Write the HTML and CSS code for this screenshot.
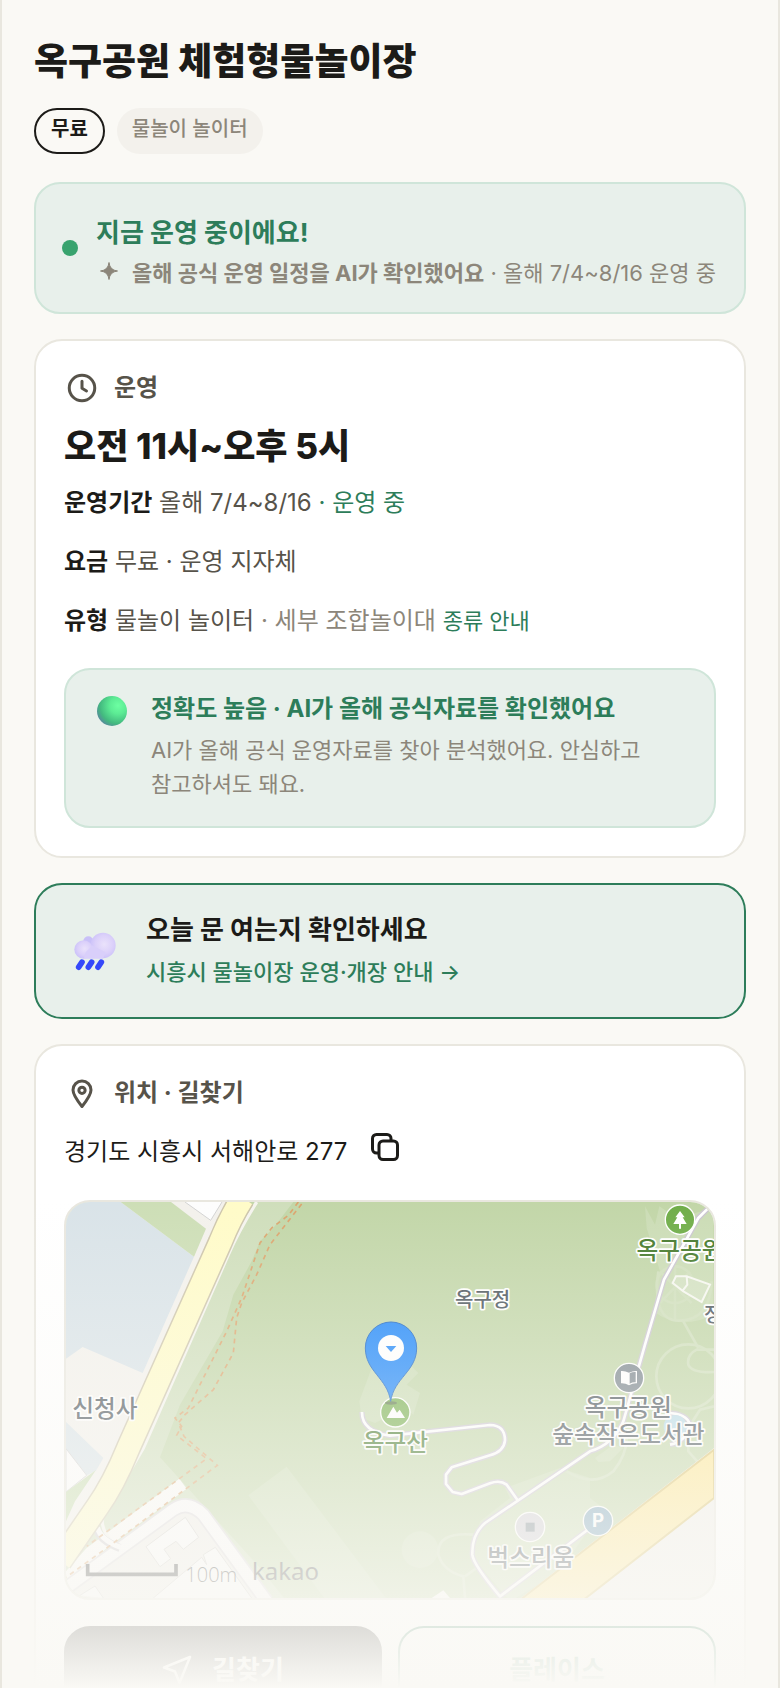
FILE: index.html
```html
<!DOCTYPE html>
<html lang="ko">
<head>
    <meta charset="UTF-8">
    <meta name="viewport" content="width=device-width, initial-scale=1.0">
    <title>옥구공원 체험형물놀이장</title>
    <link rel="stylesheet" href="styles.css">
</head>
<body>
    <main class="page">
        <h1>옥구공원 체험형물놀이장</h1>
        <div class="chips">
            <span class="chip chip-free">무료</span>
            <span class="chip">물놀이 놀이터</span>
        </div>

        <div class="cards">
            <section class="status">
                <span class="dot"></span>
                <div class="status-body">
                    <p class="status-title">지금 운영 중이에요!</p>
                    <p class="status-sub">
                        <svg class="sparkle" viewBox="0 0 24 24"><path d="M13 1.500Q13.800 9.200 21.500 10Q13.800 10.800 13 18.500Q12.200 10.800 4.500 10Q12.200 9.200 13 1.500Z" fill="currentColor" stroke="currentColor" stroke-width="1"/></svg>
                        <span><b>올해 공식 운영 일정을 AI가 확인했어요</b> · 올해 7/4~8/16 운영 중</span>
                    </p>
                </div>
            </section>

            <section class="card">
                <h2>
                    <svg class="icon" viewBox="0 0 24 24"><circle cx="12" cy="12" r="8.500"/><path d="M12 7.500v4.700l3 1.800"/></svg>
                    운영
                </h2>
                <p class="hours">오전 11시~오후 5시</p>
                <div class="facts">
                    <p><b>운영기간</b> 올해 7/4~8/16 <span class="green">· 운영 중</span></p>
                    <p><b>요금</b> 무료 · 운영 지자체</p>
                    <p><b>유형</b> 물놀이 놀이터 <span class="muted">· 세부 조합놀이대</span> <a href="#">종류 안내</a></p>
                </div>
                <div class="accuracy">
                    <svg class="ball" viewBox="0 0 30 30">
                        <defs>
                            <radialGradient id="ball" cx=".7" cy=".32" r=".8">
                                <stop offset="0" stop-color="#6dffa2"/>
                                <stop offset=".35" stop-color="#5ceb94"/>
                                <stop offset=".75" stop-color="#43b97f"/>
                                <stop offset="1" stop-color="#5a83a0"/>
                            </radialGradient>
                        </defs>
                        <circle cx="15" cy="15" r="15" fill="url(#ball)"/>
                    </svg>
                    <div>
                        <p class="accuracy-title">정확도 높음 · AI가 올해 공식자료를 확인했어요</p>
                        <p class="accuracy-text">AI가 올해 공식 운영자료를 찾아 분석했어요. 안심하고 참고하셔도 돼요.</p>
                    </div>
                </div>
            </section>

            <a class="notice" href="#">
                <svg class="cloud" viewBox="0 0 126 116">
                    <defs>
                        <radialGradient id="puff" cx=".55" cy=".45" r=".6">
                            <stop offset="0" stop-color="#eae2fb"/>
                            <stop offset=".6" stop-color="#dbd0fa"/>
                            <stop offset="1" stop-color="#c8bff9"/>
                        </radialGradient>
                    </defs>
                    <circle cx="43" cy="27" r="15" fill="#c9c0f8"/>
                    <circle cx="87" cy="40" r="38" fill="url(#puff)"/>
                    <circle cx="29" cy="52" r="28" fill="url(#puff)"/>
                    <path d="M29 80h58l8-20-40-20-20 20z" fill="#d9cffa"/>
                    <g fill="none" stroke="#3548fa" stroke-width="17" stroke-linecap="round">
                        <path d="M14 105l10-15M43 105l10-15M72 105l10-15"/>
                    </g>
                </svg>
                <span class="notice-body">
                    <strong>오늘 문 여는지 확인하세요</strong>
                    <span class="notice-link">시흥시 물놀이장 운영·개장 안내 →</span>
                </span>
            </a>

            <section class="card">
                <h2>
                    <svg class="icon" viewBox="0 0 24 24"><path d="M12 21C8.500 16.600 6 13.300 6 10a6 6 0 0 1 12 0c0 3.300-2.500 6.600-6 11z"/><circle cx="12" cy="10.200" r="2.100"/></svg>
                    위치 · 길찾기
                </h2>
                <div class="address">
                    <span>경기도 시흥시 서해안로 277</span>
                    <button class="copy" type="button" aria-label="주소 복사">
                        <svg viewBox="0 0 28 28"><rect x="8" y="8" width="18.500" height="18.500" rx="4"/><path d="M8 20H5.500a4 4 0 0 1-4-4V5.500a4 4 0 0 1 4-4H16a4 4 0 0 1 4 4V8"/></svg>
                    </button>
                </div>

                <div class="map">
                    <svg viewBox="18 42 1944 1188" preserveAspectRatio="xMidYMid slice">
                        <rect x="18" y="42" width="1944" height="1188" fill="#c2d6a8"/>
                        <!-- lighter park strip -->
                        <path d="M590 42H700L640 120L600 160L575 220L520 320L488 430L360 650L300 808L600 1140L680 1240H18V700L240 240Z" fill="#cfdebb"/>
                        <!-- water and blocks left of the road -->
                        <path d="M18 42H520L440 210L170 790L18 1050Z" fill="#f3f1ec"/>
                        <path d="M18 42H182L402 206L248 555L68 477L18 512Z" fill="#d9e3e8"/>
                        <path d="M182 42H333L438 122L402 206Z" fill="#cddeb6"/>
                        <path d="M375 42L452 97L486 42" fill="#fdfdfd" stroke="#d3d3d3" stroke-width="3"/>
                        <path d="M18 702L130 810L108 848L80 862L18 912Z" fill="#d9e3e8"/>
                        <path d="M18 782L80 862L18 912Z" fill="#fdfdfd" stroke="#d3d3d3" stroke-width="3"/>
                        <path d="M18 912L108 846L45 940L18 1000Z" fill="#c7dcaf"/>
                        <!-- lower left quarter -->
                        <path d="M18 1192L350 960Q400 930 440 985L640 1240H18Z" fill="#efede8"/>
                        <path d="M80 1080L358 872L380 902L140 1080L18 1190V1150Z" fill="#fbfaf7"/>
                        <path d="M18 1200L340 965Q385 935 430 980L620 1240" fill="none" stroke="#dddadd" stroke-width="44"/>
                        <path d="M18 1200L340 965Q385 935 430 980L620 1240" fill="none" stroke="#fbfafa" stroke-width="34"/>
                        <g fill="#fafafa" stroke="#d2d0cc" stroke-width="3">
                            <path d="M258 1076L376 988L416 1048L370 1084L348 1060L312 1084L332 1112L300 1136Z"/>
                            <path d="M280 1230L425 1108L440 1130L430 1100L466 1078L575 1230"/>
                            <path d="M60 1222L105 1194L130 1230"/>
                        </g>
                        <!-- main road -->
                        <path d="M590 42Q535 130 505 200L250 780L130 985Q115 1020 170 1080" fill="none" stroke="#f5f4ee" stroke-width="10"/>
                        <path d="M110 1022Q120 1058 180 1080" fill="none" stroke="#cfccd0" stroke-width="24"/>
                        <path d="M112 1018Q122 1056 182 1078" fill="none" stroke="#fbfafa" stroke-width="16"/>
                        <path d="M548 30Q510 90 480 165L205 780Q160 890 110 960L0 1120" fill="none" stroke="#cdc5ab" stroke-width="76"/>
                        <path d="M548 30Q510 90 480 165L205 780Q160 890 110 960L0 1120" fill="none" stroke="#fffbc8" stroke-width="67"/>
                        <!-- footpaths -->
                        <g fill="none" stroke="#dba46d" stroke-width="5" stroke-dasharray="14 13">
                            <path d="M715 42L685 82L635 120L600 165L575 240L545 330L500 430L440 550L385 660L345 690L365 715L350 742L440 812L80 1075"/>
                            <path d="M725 48L630 170L590 260L545 345L530 390L520 495L460 605L375 680L355 705L372 745L472 832L140 1080L18 1168"/>
                        </g>
                        <!-- faint clearings -->
                        <g fill="#cbdcb5">
                            <path d="M565 922L680 836L985 1240H800Z"/>
                            <path d="M935 540L898 640L905 690L945 705L1035 660L1060 680L1080 615L1040 590L1075 555L1050 530Z"/>
                            <circle cx="1080" cy="1085" r="55"/>
                            <path d="M1755 55L1785 110L1798 55L1850 90L1960 60V380Q1860 430 1780 370L1800 250L1760 120Z"/>
                            <path d="M1335 900L1500 840L1590 870V930L1630 960L1500 1150L1350 1240L1240 1110L1260 1000L1350 930Z"/>
                            <path d="M1605 810L1660 770L1690 780L1650 820L1615 822Z"/>
                        </g>
                        <g fill="none" stroke="#d0dfbc" stroke-width="8">
                            <path d="M1795 250Q1775 400 1860 398Q1950 395 1955 280"/>
                            <circle cx="1845" cy="290" r="55"/>
                            <path d="M1845 240V400M1800 345L1890 250M1800 250L1895 345M1870 400L1915 480"/>
                            <circle cx="1885" cy="565" r="96"/>
                            <path d="M1962 485H1910Q1880 500 1885 530Q1895 555 1962 552M1962 655L1920 665L1885 720V790L1920 830"/>
                            <path d="M1520 850Q1600 900 1660 850Q1700 800 1700 750"/>
                            <path d="M1240 1040Q1130 1030 1135 1100Q1150 1150 1210 1165L1215 1230M1215 1165L1250 1140"/>
                        </g>
                        <path d="M1848 265L1880 265L1950 290L1925 342L1870 310L1838 285ZM1880 265L1882 290L1868 308" fill="#d3e1c1" stroke="#f6f7f0" stroke-width="6"/>
                        <path d="M1115 1230L1150 1207L1170 1230Z" fill="#fbfaf7"/>
                        <!-- avenue, lower right -->
                        <path d="M1962 780V1240H1370Z" fill="#f1efea"/>
                        <path d="M1962 785V930L1570 1236H1380Z" fill="#fee793" stroke="#dcc46e" stroke-width="6"/>
                        <!-- narrow roads -->
                        <g fill="none" stroke="#cbc6d0" stroke-width="16" stroke-linejoin="round">
                            <path d="M1950 55L1915 90L1812 275L1755 470L1690 700Q1660 770 1590 790L1275 1005Q1235 1040 1237 1100Q1240 1130 1320 1225L1590 1020"/>
                            <path d="M906 672Q905 730 990 743L1290 711Q1335 712 1335 757Q1332 790 1290 802L1175 838L1158 860V888L1178 912L1205 918L1290 886Q1320 875 1340 890L1374 938"/>
                            <path d="M1820 675Q1880 675 1890 710Q1880 760 1830 770"/>
                        </g>
                        <g fill="none" stroke="#fff" stroke-width="8" stroke-linejoin="round">
                            <path d="M1950 55L1915 90L1812 275L1755 470L1690 700Q1660 770 1590 790L1275 1005Q1235 1040 1237 1100Q1240 1130 1320 1225L1590 1020"/>
                            <path d="M906 672Q905 730 990 743L1290 711Q1335 712 1335 757Q1332 790 1290 802L1175 838L1158 860V888L1178 912L1205 918L1290 886Q1320 875 1340 890L1374 938"/>
                            <path d="M1820 675Q1880 675 1890 710Q1880 760 1830 770"/>
                        </g>
                        <circle cx="1845" cy="715" r="34" fill="#b8dbe8"/>

                        <!-- places -->
                        <g stroke="#fff" stroke-width="4">
                            <circle cx="1860" cy="95" r="44" fill="#6fad48"/>
                            <circle cx="1707" cy="570" r="44" fill="#7b868e"/>
                            <circle cx="1006" cy="673" r="44" fill="#78b04f"/>
                            <circle cx="1410" cy="1017" r="44" fill="#cfcdd4"/>
                            <circle cx="1614" cy="999" r="44" fill="#7fa6bd"/>
                        </g>
                        <path d="M1860 69L1874 88H1868L1880 108H1863V122H1857V108H1840L1852 88H1846Z" fill="#fff"/>
                        <path d="M1707 554Q1695 548 1683 549V586Q1695 585 1707 592Q1719 585 1731 586V549Q1719 548 1707 554Z" fill="#fff"/>
                        <path d="M1709 556Q1718 551 1727 552V583Q1718 582 1709 587Z" fill="#7b868e"/>
                        <path d="M980 690L1000 656L1011 674L1019 665L1035 690Z" fill="#fff"/>
                        <rect x="1397" y="1004" width="27" height="27" fill="#7f8c94"/>
                        <text class="parking" x="1614" y="1018" font-size="56" text-anchor="middle">P</text>
                        <g class="place" font-size="60">
                            <text x="1268" y="356" text-anchor="middle">옥구정</text>
                            <text x="1932" y="402">정</text>
                        </g>
                        <g class="place" font-size="71" text-anchor="middle">
                            <text class="park" x="1860" y="214">옥구공원</text>
                            <text x="135" y="688">신청사</text>
                            <text x="1705" y="684">옥구공원</text>
                            <text x="1705" y="764">숲속작은도서관</text>
                            <text class="park" x="1006" y="790">옥구산</text>
                            <text x="1412" y="1133">벅스리움</text>
                        </g>

                        <!-- marker -->
                        <ellipse cx="993" cy="645" rx="18" ry="5" fill="#5d7a48"/>
                        <path d="M992 640C982 570 916 550 916 480A76 77 0 0 1 1070 480C1070 550 1002 570 992 640Z" fill="#1c86fa" stroke="#1765c4" stroke-width="3"/>
                        <circle cx="993" cy="480" r="39" fill="#fff"/>
                        <path d="M977 474H1009L993 492Z" fill="#1c86fa"/>

                        <path d="M83 1128V1159H348V1128" fill="none" stroke="#444" stroke-width="11"/>
                        <text class="scale" x="376" y="1182" font-size="60">100m</text>
                        <text class="kakao" x="576" y="1176" font-size="72">kakao</text>
                    </svg>
                </div>

                <div class="actions">
                    <button class="btn btn-dark" type="button">
                        <svg viewBox="0 0 30 30"><path d="M28 2L2 12.500L13 16.500L17.500 28Z"/></svg>
                        길찾기
                    </button>
                    <button class="btn" type="button">플레이스</button>
                </div>
            </section>
        </div>

        <div class="fade"></div>
    </main>
</body>
</html>
```

FILE: styles.css
```css
* {
    box-sizing: border-box;
}
body {
    margin: 0;
    background: #faf9f5;
    color: #1c1b18;
    font-family: Inter, "Noto Sans CJK KR", sans-serif;
    font-size: 24px;
    line-height: 40px;
    word-break: keep-all;
}
h1, h2, p {
    margin: 0;
}
a {
    text-decoration: none;
}
svg {
    display: block;
    flex-shrink: 0;
}
.page {
    position: relative;
    height: 100vh;
    overflow: hidden;
    padding: 36px 32px 0;
    border-left: 2px solid #e9e7df;
    border-right: 2px solid #e9e7df;
}
h1 {
    font-size: 37px;
    font-weight: 800;
    line-height: 52px;
}
.chips {
    display: flex;
    gap: 12px;
    margin: 20px 0 28px;
}
.chip {
    padding: 5px 15px 9px;
    border-radius: 23px;
    background: #f3f1ec;
    color: #8c867a;
    font-size: 20px;
    font-weight: 500;
    line-height: 32px;
}
.chip-free {
    padding: 3px 15px 7px;
    border: 2px solid #1c1b18;
    background: none;
    color: #1c1b18;
    font-weight: 700;
}
.cards {
    display: flex;
    flex-direction: column;
    gap: 25px;
}
.status {
    display: flex;
    align-items: center;
    gap: 18px;
    padding: 22px 26px;
    border: 2px solid #cfe5d9;
    border-radius: 26px;
    background: #e8f0eb;
}
.dot {
    width: 16px;
    height: 16px;
    border-radius: 50%;
    background: #38a36e;
    flex-shrink: 0;
}
.status-body {
    padding-top: 10px;
}
.status-title {
    color: #2d7d5a;
    font-size: 26px;
    font-weight: 700;
    line-height: 34px;
}
.status-sub {
    display: flex;
    align-items: center;
    gap: 12px;
    margin-top: 6px;
    color: #8c867a;
    font-size: 22px;
    line-height: 34px;
}
.sparkle {
    width: 24px;
    height: 24px;
}
.card {
    padding: 28px;
    border: 2px solid #e9e7df;
    border-radius: 28px;
    background: #fff;
}
h2 {
    display: flex;
    align-items: center;
    gap: 14px;
    color: #57534a;
    font-size: 24px;
    font-weight: 700;
    line-height: 38px;
}
.icon {
    width: 36px;
    height: 36px;
    fill: none;
    stroke: currentColor;
    stroke-width: 2;
    stroke-linecap: round;
    stroke-linejoin: round;
}
.hours {
    margin: 16px 0 14px;
    font-size: 35px;
    font-weight: 800;
    line-height: 46px;
}
.facts {
    display: grid;
    gap: 19px;
    color: #57534a;
}
.facts b {
    color: #1c1b18;
}
.facts a {
    color: #2d7d5a;
    font-size: 22px;
}
.facts .green {
    color: #2d7d5a;
}
.facts .muted {
    color: #8c867a;
}
.accuracy {
    display: flex;
    gap: 24px;
    margin-top: 27px;
    padding: 22px 31px 25px;
    border: 2px solid #cfe5d9;
    border-radius: 26px;
    background: #e8f0eb;
}
.ball {
    width: 30px;
    height: 30px;
    margin-top: 4px;
}
.accuracy-title {
    color: #2d7d5a;
    font-size: 24px;
    font-weight: 700;
    line-height: 34px;
}
.accuracy-text {
    margin-top: 7px;
    color: #8c867a;
    font-size: 22px;
    line-height: 34px;
}
.notice {
    display: flex;
    align-items: center;
    gap: 30px;
    padding: 28px 38px;
    border: 2px solid #2d7d5a;
    border-radius: 28px;
    background: #e8f0eb;
    color: #1c1b18;
}
.cloud {
    width: 42px;
    height: 39px;
}
.notice-body {
    display: grid;
    gap: 8px;
    line-height: 34px;
}
.notice-body strong {
    font-size: 26px;
}
.notice-link {
    color: #2d7d5a;
    font-size: 22px;
    font-weight: 500;
}
.address {
    display: flex;
    align-items: center;
    gap: 24px;
    margin: 20px 0 28px;
}
.copy {
    padding: 0 0 10px;
    border: none;
    background: none;
    color: #1c1b18;
    cursor: pointer;
}
.copy svg {
    width: 28px;
    height: 28px;
    fill: none;
    stroke: currentColor;
    stroke-width: 3;
}
.map {
    overflow: hidden;
    border: 2px solid #e9e7df;
    border-radius: 26px;
}
.map svg {
    width: 100%;
}
.place {
    fill: #4b555c;
    stroke: #fff;
    stroke-width: 10px;
    stroke-linejoin: round;
    paint-order: stroke;
    font-weight: 500;
}
.park {
    fill: #43782a;
}
.parking {
    fill: #fff;
    font-weight: 700;
}
.scale {
    fill: #444;
    font-family: "Open Sans", sans-serif;
    font-weight: 300;
}
.kakao {
    fill: #555;
    font-family: "Noto Sans", sans-serif;
}
.actions {
    display: grid;
    grid-template-columns: 1fr 1fr;
    gap: 16px;
    margin-top: 26px;
}
.btn {
    display: flex;
    align-items: center;
    justify-content: center;
    gap: 20px;
    padding: 22px;
    border: 2px solid #2d7d5a;
    border-radius: 26px;
    background: #fff;
    color: #2d7d5a;
    font: inherit;
    font-size: 26px;
    font-weight: 700;
    cursor: pointer;
}
.btn svg {
    width: 30px;
    height: 30px;
    fill: none;
    stroke: currentColor;
    stroke-width: 2.5;
    stroke-linejoin: round;
}
.btn-dark {
    border-color: #1c1b18;
    background: #1c1b18;
    color: #fff;
}
/* page fades out toward the bottom of the screen */
.fade {
    position: absolute;
    right: 0;
    bottom: 0;
    left: 0;
    height: 488px;
    background: linear-gradient(rgba(250, 249, 245, 0), #faf9f5);
    pointer-events: none;
}
```
